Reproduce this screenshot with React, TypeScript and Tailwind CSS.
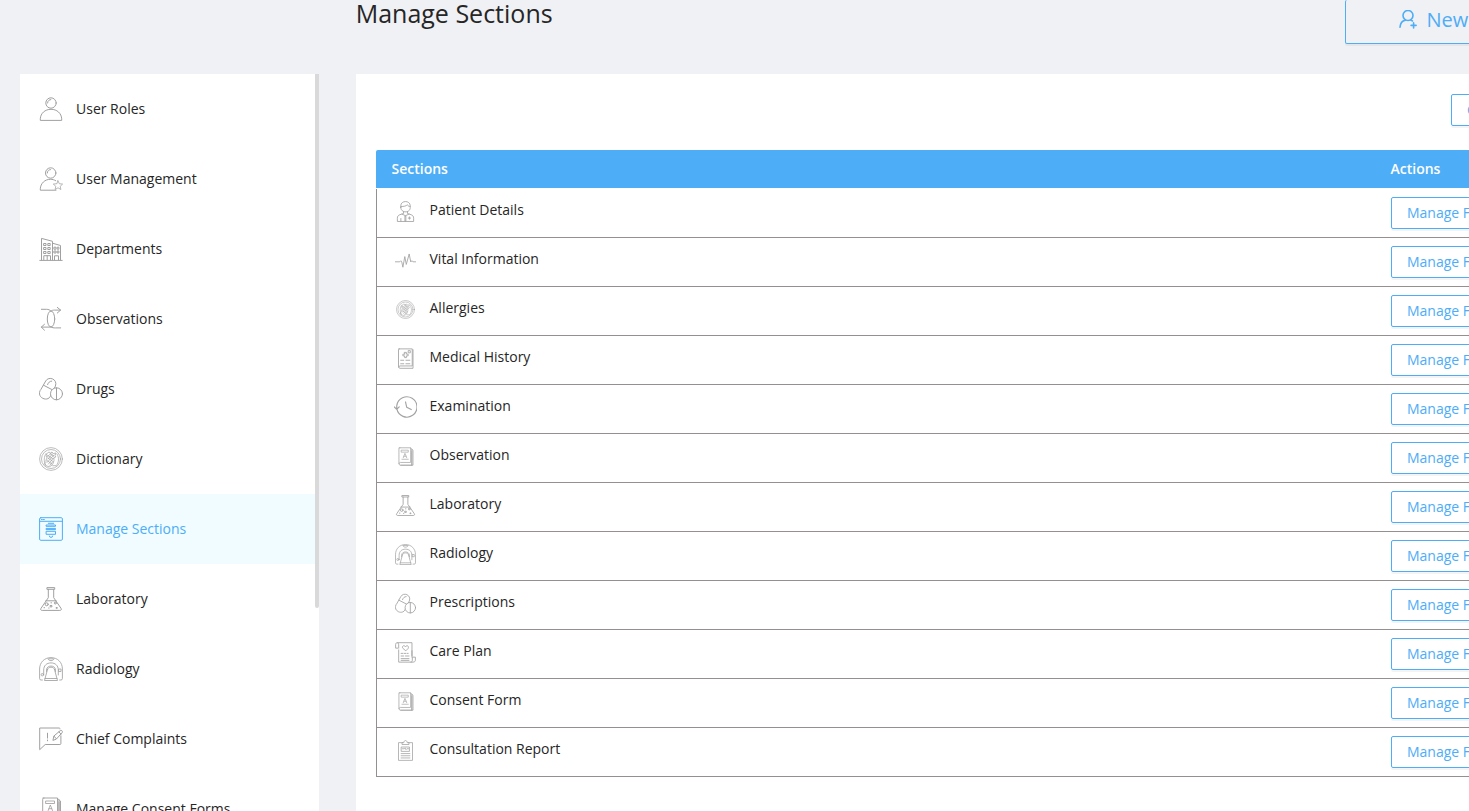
import React from "react";

type IconName =
  | "user" | "userStar" | "building" | "swap" | "pills" | "germ" | "window" | "flask"
  | "scanner" | "complaint" | "book" | "doctor" | "pulse" | "record" | "clock" | "scroll" | "clipboard";

const drawings: Record<IconName, React.ReactNode> = {
  user: (
    <>
      <circle cx="12" cy="6" r="5.2" />
      <path d="M1.300 23v-1.200C1.600 16.300 6 12.300 12 12.300s10.400 4 10.700 9.500V23z" />
      <path d="M8.600 6c0-1.900 1.300-3.200 3.200-3.400" strokeDasharray="2.500 1" />
    </>
  ),
  userStar: (
    <>
      <circle cx="11.700" cy="6" r="5.200" />
      <path d="M17 23.200H1.300v-1.400c.3-5.500 4.500-9.500 10.200-9.500 2 0 3.700.5 5.200 1.400" />
      <path d="M8.300 6c0-1.900 1.300-3.200 3.200-3.400" strokeDasharray="2.500 1" />
      <path d="m19 13.800 1.300 2.900 3.300.4-2.400 2.200.7 3.200-2.900-1.700-2.900 1.700.7-3.200-2.500-2.200 3.300-.4z" strokeWidth=".75" />
    </>
  ),
  building: (
    <>
      <path d="M.8 23.400h22.400M2.500 23V1.400l11 2.900V23M13.500 6.200l8 2.300V23" />
      <path d="M5 6.500h2v2H5zM9.200 6.500h2v2h-2zM5 10.500h2v2H5zM9.200 10.500h2v2h-2zM5 14.500h2v2H5zM9.200 14.500h2v2h-2zM15.300 10.200h1.700v2h-1.700zM18.600 10.200h1.300v2h-1.300zM15.300 14h1.700v2h-1.700zM18.600 14h1.300v2h-1.300zM4.800 23v-4.300h6.700V23M8.200 18.700V23M15.500 23v-4.200h4V23" />
    </>
  ),
  swap: (
    <>
      <ellipse cx="12" cy="12" rx="3.700" ry="8" />
      <path d="M2.400 2.300h5.100c2 0 3.400.7 4.500 1.800M12 4c1-.7 2-.9 3.500-.9h6" />
      <path d="m18.300.4 3.300 2.700-3.300 2.900M12 20c1.500.8 2.500.9 4.500.9h5.200M12 20c-1.500.2-2.500.1-4 .1H2.300M5.500 17.300l-3.200 2.800 3.200 3.100" />
    </>
  ),
  pills: (
    <>
      <path d="M2 12.300 6.700 4C9.800-1.400 19 2.300 16.400 9.100l-5.200 10.500C8.200 25-2.300 20.800 1 13.800z" />
      <path d="m4.500 8.200 9.200 4.800M8.600 7.600c.8-2.100 1.900-3.400 4.100-3.500" />
      <circle cx="17.500" cy="16.800" r="6" fill="white" />
      <path d="M17.500 10.800v12" />
    </>
  ),
  germ: (
    <g strokeWidth=".7">
      <circle cx="12" cy="12" r="11.400" />
      <circle cx="12" cy="12" r="9.500" />
      <path d="M7 6.500c-2.200 3-2.400 8.500-.5 11.300M18 7c2.300 3.500 2 8.500-.8 11.700h-3.500" />
      <path d="M8 6.500 10 5l1.500 1L13 5l1.500 1.500L17 6l-1 2.500.8 1.500-2 1 .2 2.500-1 3-2 2.500-3 .5-3-1.500-.3-2 1.300-1.500L7 13l1-2-.7-2z" />
      <path d="M8 8l5.500 3.500M9 12l5-5.500M8.500 9.500l4-3.500M8 15.500l7-7.500M9.500 17l5-6M8 13.500l5 3.500M9 11l5 3.500M11 6.500l4 3M11 18l2.500-3" />
    </g>
  ),
  window: (
    <>
      <rect x=".6" y=".7" width="22.800" height="22.600" rx="1.200" />
      <path d="M.6 4.300h22.800M2.500 2.500h.8M4.500 2.500h.8" />
      <path d="M9.300 6.300h5.400M7.500 8h9v1.300h-9zM7.500 11.400h9v1.200h-9zM7.500 14.300h9v3h-9z" />
      <path d="M10.300 19a1.700 1.400 0 1 0 3.400 0" />
    </>
  ),
  flask: (
    <>
      <path d="M8.300.6h7.400v1.700H8.300zM9.300 2.300v8.400L2 21.300c-.8 1.200-.3 2.100 1.200 2.100h17.600c1.500 0 2-.9 1.200-2.100l-7.300-10.600V2.300M6.800 13.800h10.400" />
      <circle cx="7.700" cy="17.300" r="1.500" />
      <circle cx="16.300" cy="16" r="1" />
      <path d="M11.500 18.500h1.400v1.400h-1.400zM17.500 20.500h.8v.8h-.8zM5 20.700h.6M9.700 21h.4M12 15.800h.5" />
    </>
  ),
  scanner: (
    <>
      <path d="M3.400 23H2c-.9 0-1.400-.5-1.400-1.400V12C.6 5.400 5.400.6 12 .6S23.400 5.400 23.400 12v9.600c0 .9-.5 1.400-1.400 1.400h-1.400" strokeWidth=".85" />
      <path d="M4.700 18V13c0-4.400 2.900-7.100 7.300-7.100s7.300 2.700 7.300 7.100v5M7.500 14.500v-1.400c0-5.400 9-5.400 9 0v1.400M8.500 12.500 5.500 23.500h13l-3-11M8.500 12.500c.5-3.200 6.500-3.200 7 0M6 21.500h12M9 2c1 2.300 5 2.300 6 0M9.700 1.800h4.600" strokeWidth=".85" />
      <circle cx="3.300" cy="17.700" r="1.200" strokeWidth=".8" />
      <path d="M20 12h2v2.500h-2z" strokeWidth=".8" />
    </>
  ),
  complaint: (
    <>
      <path d="M21 1.900c0-.6-.3-.9-.9-.9H.7v21.700l5.500-5.200h14.700c.6 0 1-.3 1-.9V8.800M8.500 6.200v4.900M8.500 13v.8" />
      <path d="m14 13 .9-4 6.300-5.300c1.300-1 3 .7 1.900 2l-5.600 6.200zM19.900 4.900l2.100 2.200M15 9.200l2.300 2.500" />
    </>
  ),
  book: (
    <>
      <path d="M4 1h14.500v18.500H5.500c-2.200 0-2.200 3.500 0 3.500H20V3M3.700 21V2.200c0-.9.500-1.200 1.300-1.200M18.500 1.500l3 2.500v19H6M20 5v18" strokeWidth=".95" />
      <path d="M7 4h8.500v2.500H7zM9.200 13.500l2.100-5.500 2.200 5.500M10 11.700h2.700M7.500 15.500h8" strokeWidth=".85" />
    </>
  ),
  doctor: (
    <>
      <path d="M6.600 7.500V5.500C6.600-1 17.400-1 17.400 5.500v2c0 6.700-10.800 6.700-10.800 0z" />
      <path d="M6.800 6.300c3.500 0 5.900-.5 7.400-2 .5 1.300 1.400 1.800 3 2M9.700 12.500v1.800L5.500 15.700c-1.900.6-2.800 2-2.800 4v3.700h18.600v-3.700c0-2-.9-3.400-2.800-4l-4.200-1.400v-1.800M8 15l4 1.800 4-1.800M11.800 17h.6v6h-.6zM6.700 20v3M15.200 19.500h2.600M16.500 18.200v2.600" />
    </>
  ),
  pulse: <path d="M.2 13.500h5.300l1.200-1.200 1 1.200 1.300 6.200L11.200 7.500l1.700 9 3.300-12 1.800 9.200 1.300-1.500 1.200 1.300h3.300" />,
  record: (
    <>
      <path d="M4.200 1h15.500v19.500H5.800c-2 0-2 2.700 0 2.700h14.800V2M4 21.800V2.200C4 1.500 4.400 1 5.200 1" />
      <path d="M11 5h2v2h2v2h-2v2h-2V9H9V7h2zM6.500 14h3.500M6.500 18h3.500M12.500 14H17M12.500 18H17M15.500 3h2v2.500h-2z" />
    </>
  ),
  clock: (
    <path d="M3 13.500A10.600 10.600 0 1 0 2.900 10L2.800 13M.2 11.300l2.600 2.500 2.700-2.500M12 6.200l1.300 5.600 4.700 2.400" strokeWidth="1.200" />
  ),
  scroll: (
    <>
      <path d="M3 7H.7V3C.7 1.300 1.500.8 3 .8h16.400v15M4.200 7V3.200C4.200 1.500 3.600.8 2.700.8M4.200 9v14h16.500c1.700 0 2.600-.9 2.600-2.500v-3.200h-3.500v3.200c0 1.600-.3 2.500-1.600 2.500M19.400 10v7.300" />
      <path d="M12 9.800 8.800 7c-1.300-2.400 1.900-4 3.200-1.500 1.300-2.500 4.500-.9 3.200 1.500zM7 13h2M10.500 13h2M14 13h1M7 16h3M12 16h4M7 19h9M7 21h9" />
    </>
  ),
  clipboard: (
    <path d="M9 3H4v20.300h16V3h-5M8 4.700V3h2c.3-3.200 3.700-3.200 4 0h2v1.700zM7.500 8h9v5h-9zM8.500 10h2l1-1 1 2 1-1h2M7 15.500h10M7 18h10M7 20.500h10" strokeWidth=".9" />
  ),
};

function Icon({ name, className }: { name: IconName; className: string }) {
  return (
    <svg viewBox="0 0 24 24" fill="none" stroke="currentColor" strokeWidth="1" strokeLinecap="round" strokeLinejoin="round" className={className}>
      {drawings[name]}
    </svg>
  );
}

const menu: [string, IconName][] = [
  ["User Roles", "user"],
  ["User Management", "userStar"],
  ["Departments", "building"],
  ["Observations", "swap"],
  ["Drugs", "pills"],
  ["Dictionary", "germ"],
  ["Manage Sections", "window"],
  ["Laboratory", "flask"],
  ["Radiology", "scanner"],
  ["Chief Complaints", "complaint"],
  ["Manage Consent Forms", "book"],
];

const sections: [string, IconName, string][] = [
  ["Patient Details", "doctor", "h-[21px] w-[21px]"],
  ["Vital Information", "pulse", "h-[21px] w-[21px]"],
  ["Allergies", "germ", "h-[19px] w-[19px]"],
  ["Medical History", "record", "h-[21px] w-[21px]"],
  ["Examination", "clock", "h-[23px] w-[23px]"],
  ["Observation", "book", "h-[19px] w-[19px]"],
  ["Laboratory", "flask", "h-[21px] w-[21px]"],
  ["Radiology", "scanner", "h-[21px] w-[21px]"],
  ["Prescriptions", "pills", "h-[21px] w-[21px]"],
  ["Care Plan", "scroll", "h-[21px] w-[21px]"],
  ["Consent Form", "book", "h-[19px] w-[19px]"],
  ["Consultation Report", "clipboard", "h-[21px] w-[21px]"],
];

const outline = "shrink-0 whitespace-nowrap rounded-[2px] border border-[#4dadf7] text-[#4dadf7] shadow-[0_2px_0_rgba(0,0,0,0.045)]";

export default function App() {
  return (
    <div className="flex h-[811px] w-full flex-col overflow-hidden bg-[#f0f1f5] font-['Open_Sans','Noto_Sans',sans-serif] text-sm text-[#262626]">
      <header className="flex h-[74px] shrink-0 items-start pl-[355.700px]">
        <h1 className="h-[30px] w-[989.300px] shrink-0 text-[25px] leading-[26px]">Manage Sections</h1>
        <button className={`${outline} flex h-[44px] w-[190px] items-center border-t-0 pb-[4px] pl-[52px] text-[20px]`}>
          <svg viewBox="0 0 20 20" className="mr-[8.500px] h-5 w-5 shrink-0" fill="none" stroke="currentColor" strokeWidth="1.600" strokeLinecap="round">
            <circle cx="10" cy="5.500" r="5" />
            <path d="M2 17.300c.3-3.700 2.300-6.500 5.300-7.200M12.700 10.100l1.800.8M15.600 12.900v5M13.100 15.400h5" />
          </svg>
          <span className="pt-[2px]">New</span>
        </button>
      </header>
      <div className="flex min-h-0 flex-1">
        <aside className="ml-5 flex w-[299px] shrink-0 overflow-hidden bg-white">
          <nav className="w-[295px]">
            {menu.map(([label, icon]) => (
              <a
                key={label}
                className={
                  label === "Manage Sections"
                    ? "flex h-[70px] items-center bg-[#f0fcff] pl-[19px] text-[#4dadf7]"
                    : "flex h-[70px] items-center pl-[19px]"
                }
              >
                <Icon
                  name={icon}
                  className={label === "Manage Sections" ? "mr-[13px] h-6 w-6 shrink-0" : "mr-[13px] h-6 w-6 shrink-0 text-[#a0a0a0]"}
                />
                <span>{label}</span>
              </a>
            ))}
          </nav>
          <div className="h-[534px] w-1 rounded-b-[2px] bg-[#d9d9d9]" />
        </aside>
        <main className="ml-[37px] w-[1113px] shrink-0 overflow-hidden bg-white pl-5">
          <div className="flex h-[76px] pl-[1075px] pt-5">
            <button className={`${outline} h-8 w-24 pl-[15px] text-left`}>Create</button>
          </div>
          <div className="w-[1240px]">
            <div className="mb-px flex h-[38px] items-center rounded-tl-[2px] bg-[#4dadf7] pl-[15.500px] font-semibold text-white">
              <span className="w-[999px]">Sections</span>
              <span>Actions</span>
            </div>
            {sections.map(([label, icon, size]) => (
              <div key={label} className="flex h-[49px] border-b border-l border-[#968f8f] pl-[17px]">
                <div className="mr-[12.500px] mt-[11px] flex h-[23px] w-[23px] shrink-0 items-center justify-center text-[#a3a3a3]">
                  <Icon name={icon} className={`${size} shrink-0`} />
                </div>
                <span className="w-[961.500px] shrink-0 pt-[11px] leading-5">{label}</span>
                <button className={`${outline} mt-2 h-8 w-[122px] pl-[15px] text-left`}>Manage Form</button>
              </div>
            ))}
          </div>
        </main>
      </div>
    </div>
  );
}
